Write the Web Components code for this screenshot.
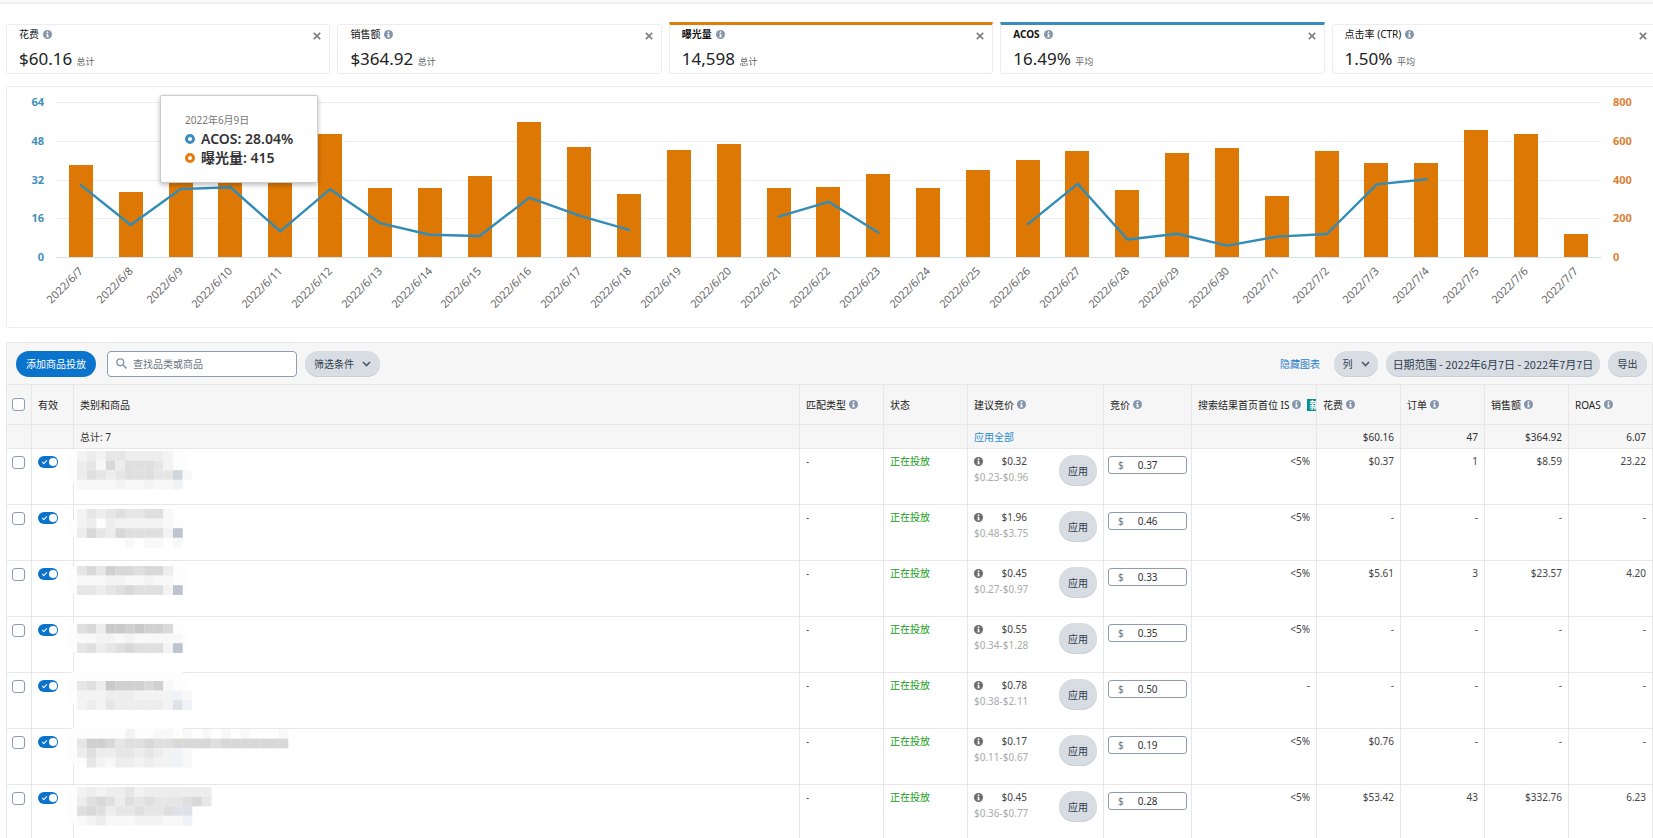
<!DOCTYPE html>
<html lang="zh-CN">
<head>
<meta charset="utf-8">
<title>商品投放</title>
<style>
html{scrollbar-width:none}
body{margin:0;overflow-x:hidden;background:#fff;color:#232f3e;font:10px/16px "Noto Sans","Noto Sans CJK SC",sans-serif}
</style>
</head>
<body>
<campaign-page>
  <metric-card label="花费" value="$60.16" kind="总计"></metric-card>
  <metric-card label="销售额" value="$364.92" kind="总计"></metric-card>
  <metric-card label="曝光量" value="14,598" kind="总计" active style="--accent:#e07b0c"></metric-card>
  <metric-card label="ACOS" value="16.49%" kind="平均" active style="--accent:#3a8dbb"></metric-card>
  <metric-card label="点击率 (CTR)" value="1.50%" kind="平均"></metric-card>
  <trend-chart slot="chart"></trend-chart>
  <table-toolbar slot="table"></table-toolbar>
  <target-table slot="table"></target-table>
</campaign-page>
<script>
class Base extends HTMLElement {
  connectedCallback() {
    if (this.shadowRoot) return;
    this.attachShadow({ mode: 'open' }).innerHTML = this.render();
  }
}

customElements.define('campaign-page', class extends Base {
  render() {
    return `<style>
      :host{display:block;overflow:hidden;box-sizing:border-box}
      .strip{height:2px;background:#fafafa;border-bottom:2px solid #f0f0f0}
      .cards{display:grid;grid-template-columns:repeat(5,1fr);gap:7px;align-items:end;margin:18px -3px 0 6px}
      .chart{margin:12px -3px 0 6px}
      .table{margin:14px 0 0 6px}
    </style>
    <div class="strip"></div>
    <section class="cards"><slot></slot></section>
    <section class="chart"><slot name="chart"></slot></section>
    <section class="table"><slot name="table"></slot></section>`;
  }
});

customElements.define('info-icon', class extends Base {
  render() {
    return `<style>:host{display:inline-block;flex:none;width:9px;height:9px;color:#8494ab}svg{display:block;width:100%;height:100%}</style>
    <svg viewBox="0 0 18 18" aria-hidden="true"><circle cx="9" cy="9" r="9" fill="currentColor"/>
    <circle cx="9" cy="4.4" r="1.8" fill="#fff"/><path d="M6.4 7.4h4.2v5.4h1.4v1.8H6.2v-1.8h1.4V9.2H6.4z" fill="#fff"/></svg>`;
  }
});

customElements.define('metric-card', class extends Base {
  render() {
    const a = n => this.getAttribute(n);
    return `<style>
      :host{display:block;box-sizing:border-box;height:50px;border:1px solid #ededed;border-radius:3px;padding:0 8px 0 12px;background:#fff}
      :host([active]){height:52px;border-top:3px solid var(--accent);border-radius:0 0 3px 3px}
      header{display:flex;align-items:center;gap:4px;height:18px}
      h3{margin:0;font-size:10px;font-weight:400;line-height:16px;color:#111}
      :host([active]) h3{font-weight:700}
      button{margin-left:auto;border:0;background:none;padding:3px 0 0;width:8px;height:18px}
      svg{display:block;width:8px;height:8px}
      p{margin:4px 0 0;line-height:24px;font-size:17px;color:#222}
      small{font-size:9px;color:#666}
    </style>
    <header><h3>${a('label')}</h3><info-icon></info-icon>
      <button aria-label="移除${a('label')}"><svg viewBox="0 0 8 8"><path d="M.8.8l6.4 6.4M7.2.8L.8 7.2" stroke="#808080" stroke-width="1.7"/></svg></button></header>
    <p>${a('value')} <small>${a('kind')}</small></p>`;
  }
});

const DATES = [...Array.from({ length: 24 }, (_, i) => `2022/6/${i + 7}`), ...Array.from({ length: 7 }, (_, i) => `2022/7/${i + 1}`)];
const IMPRESSIONS = [475,333,415,410,400,633,355,355,420,698,567,323,554,581,358,363,429,358,450,502,546,347,535,562,317,546,486,486,654,635,121];
const ACOS = [29.7,13.2,28.04,28.8,10.6,28,14,9.2,8.7,24.5,17.1,11.2,null,null,16.7,22.8,10.1,null,null,13.6,30.2,7.2,9.6,4.7,8.4,9.5,30,32.1,null,null,null];

customElements.define('trend-chart', class extends Base {
  render() {
    let path = '', pen = 'M';
    ACOS.forEach((v, i) => {
      if (v === null) { pen = 'M'; return; }
      path += `${pen}${i + .5} ${64 - v}`;
      pen = 'L';
    });
    return `<style>
      :host{display:block;box-sizing:border-box;position:relative;height:242px;border:1px solid #ededed;border-radius:3px;padding-top:15px}
      .row{display:grid;grid-template-columns:49px 1fr 54px}
      .axis{display:flex;flex-direction:column;justify-content:space-between;height:171px;margin-top:-8px;font:700 11px/16px "Noto Sans",sans-serif}
      .left{text-align:right;padding-right:12px;color:#4390bb}
      .right{padding-left:12px;color:#dd7f35}
      .plot{display:grid;height:155px}
      .plot>*{grid-area:1/1;min-width:0;min-height:0}
      .grid{display:flex;flex-direction:column;justify-content:space-between;margin-bottom:-1px}
      .grid i{height:1px;background:#ededed}
      .grid i:last-child{background:#d5e0eb}
      .bars{display:flex;align-items:flex-end;justify-content:space-around}
      .bars i{width:24px;background:#dd7804}
      svg{width:100%;height:155px;overflow:visible;display:block}
      .dates{grid-column:2;display:flex;margin-top:-2px}
      .dates div{flex:1 1 0;width:0}
      .dates div>div{width:50%;display:flex;justify-content:flex-end}
      .dates span{white-space:nowrap;font-size:11px;line-height:12px;color:#666;transform-origin:right center;transform:rotate(-45deg)}
      .tip{position:absolute;left:153px;top:8px;box-sizing:border-box;width:158px;height:88px;padding:15px 0 0 24px;background:#fff;border:1px solid #ccc;border-radius:2px;box-shadow:0 2px 5px #0004}
      .tip p{margin:0;font-size:10px;line-height:18px;color:#777}
      .tip b{display:flex;align-items:center;gap:6px;font-weight:600;font-size:14px;line-height:19px;color:#333;white-space:nowrap}
      .tip u{box-sizing:border-box;flex:none;width:10px;height:10px;border:3px solid #3a8dbb;border-radius:50%}
    </style>
    <div class="row">
      <div class="axis left"><span>64</span><span>48</span><span>32</span><span>16</span><span>0</span></div>
      <div class="plot">
        <div class="grid"><i></i><i></i><i></i><i></i><i></i></div>
        <div class="bars">${IMPRESSIONS.map(v => `<i style="height:${v / 8}%"></i>`).join('')}</div>
        <svg viewBox="0 0 31 64" preserveAspectRatio="none"><path d="${path}" fill="none" stroke="#318cb8" stroke-width="2.4" vector-effect="non-scaling-stroke" stroke-linejoin="round" stroke-linecap="round"/></svg>
      </div>
      <div class="axis right"><span>800</span><span>600</span><span>400</span><span>200</span><span>0</span></div>
      <div class="dates">${DATES.map(d => `<div><div><span>${d}</span></div></div>`).join('')}</div>
    </div>
    <div class="tip"><p>2022年6月9日</p><b><u></u>ACOS: 28.04%</b><b><u style="border-color:#e67c0c"></u>曝光量: 415</b></div>`;
  }
});

customElements.define('pill-button', class extends Base {
  render() {
    return `<style>
      :host{display:block}
      button{display:flex;align-items:center;justify-content:center;gap:8px;box-sizing:border-box;width:100%;height:26px;padding:0;border:0;border-radius:15px;background:#d8dde3;box-shadow:inset 0 -1px #c8ced6;color:#2d3b4e;font:inherit;white-space:nowrap}
      :host([primary]) button{background:#0a73cc;box-shadow:none;color:#fff}
      :host([tall]) button{height:31px}
      svg{width:9px;height:6px}
    </style>
    <button><slot></slot>${this.hasAttribute('menu') ? '<svg viewBox="0 0 9 6"><path d="M1 1l3.5 3.5L8 1" fill="none" stroke="#4b5a70" stroke-width="1.6"/></svg>' : ''}</button>`;
  }
});

customElements.define('table-toolbar', class extends Base {
  render() {
    return `<style>
      :host{display:flex;align-items:center;gap:8px;box-sizing:border-box;height:42px;padding:0 5px 0 9px;background:#f6f6f6;border:1px solid #e7e7e7;border-bottom:0;border-radius:3px 3px 0 0}
      .add{width:80px;margin-right:3px}
      label{display:flex;align-items:center;gap:6px;box-sizing:border-box;width:190px;height:26px;padding-left:8px;border:1px solid #8d9cb3;border-radius:4px;background:#fff}
      label svg{width:11px;height:11px;flex:none}
      input{flex:1;min-width:0;border:0;padding:0;background:none;font:inherit;outline:0}
      input::placeholder{color:#6b7482;opacity:1}
      .filter{width:75px}
      a{margin-left:auto;margin-right:6px;color:#2b80c9;text-decoration:none}
      .cols{width:44px}
      .range{width:214px;font-size:11px;font-family:"Noto Sans CJK SC",sans-serif}
      .export{width:39px}
    </style>
    <pill-button class="add" primary>添加商品投放</pill-button>
    <label><svg viewBox="0 0 11 11"><circle cx="4.3" cy="4.3" r="3.4" fill="none" stroke="#8494ab" stroke-width="1.4"/><path d="M6.8 6.8l3.6 3.6" stroke="#8494ab" stroke-width="1.6"/></svg>
      <input type="search" aria-label="查找品类或商品" placeholder="查找品类或商品"></label>
    <pill-button class="filter" menu>筛选条件</pill-button>
    <a href="#">隐藏图表</a>
    <pill-button class="cols" menu>列</pill-button>
    <pill-button class="range">日期范围 - 2022年6月7日 - 2022年7月7日</pill-button>
    <pill-button class="export">导出</pill-button>`;
  }
});

customElements.define('toggle-switch', class extends Base {
  render() {
    return `<style>
      :host{display:block;width:20px;height:12px}
      input{appearance:none;display:block;position:relative;margin:0;width:20px;height:12px;border-radius:6px;background:#0a73cc}
      input::before{content:"";position:absolute;right:1px;top:2px;width:8px;height:8px;border-radius:50%;background:#fff}
      input::after{content:"";position:absolute;left:4px;top:4px;width:4px;height:2px;border:solid #fff;border-width:0 0 1px 1px;transform:rotate(-45deg)}
    </style><input type="checkbox" role="switch" checked aria-label="有效">`;
  }
});

customElements.define('bid-input', class extends Base {
  render() {
    return `<style>
      :host{display:block}
      label{display:flex;align-items:center;box-sizing:border-box;height:18px;border:1px solid #8d9cb3;border-radius:3px;background:#fff;padding-left:9px;color:#66758c}
      input{width:40px;margin-left:14px;border:0;padding:0;background:none;font:inherit;color:#333;outline:0}
    </style><label>$<input aria-label="竞价" value="${this.getAttribute('value')}"></label>`;
  }
});

/* Redacted product name: a coarse mosaic. Each character is one tile, 0 is empty. */
const TILE = { 1: '#f8f8f8', 2: '#f3f3f3', 3: '#ededed', 4: '#e6e6e6', 5: '#dfdfdf', 6: '#d8d8d8', 7: '#d0d0d0', 8: '#c9c9c9', a: '#eff2f6', b: '#dee2e8', c: '#cfd6e0', d: '#bcc4d0' };
const MOSAICS = [
  [2, 0, 34, ['2324433332', '3416355542', '3543455544c1', '1111211211a']],
  [4, 14, 18, ['2434544551', '2303222221', '3643655552d', '00000101101']],
  [5, 5, 28, ['4647665663', '1112211211', '4434565552d']],
  [7, 6, 30, ['5638878776', '11221211111', '4534565552d']],
  [8, -2, 34, ['4538777671', '2223332222a1', '2324333332ba']],
  [0, -2, 38, ['00000200110101010100010', '4776455655666656666666', '3533443432a1', '0421332322a1']],
  [2, 0, 38, ['23233423333333', '35653545444564', '5653445445bb', '12311122211a']]
];
customElements.define('name-mosaic', class extends Base {
  render() {
    const [y, sy, sh, rows] = MOSAICS[this.getAttribute('index')];
    const t = 9.6;
    const tiles = rows.map((r, j) => [...r].map((c, i) => c === '0' ? '' :
      `<rect x="${10 + i * t}" y="${y + j * t}" width="9.7" height="9.7" fill="${TILE[c]}"/>`).join('')).join('');
    return `<style>:host{display:block;height:54px;margin-left:-13px;position:relative}svg{display:block;overflow:visible}</style>
    <svg width="310" height="54" aria-hidden="true"><rect x="0" y="${sy}" width="120" height="${sh}" rx="9" fill="#fdfdfd"/>${tiles}</svg>`;
  }
});

const ROWS = [
  ['$0.32', '$0.23-$0.96', '0.37', '<5%', '$0.37', '1', '$8.59', '23.22'],
  ['$1.96', '$0.48-$3.75', '0.46', '<5%', '-', '-', '-', '-'],
  ['$0.45', '$0.27-$0.97', '0.33', '<5%', '$5.61', '3', '$23.57', '4.20'],
  ['$0.55', '$0.34-$1.28', '0.35', '<5%', '-', '-', '-', '-'],
  ['$0.78', '$0.38-$2.11', '0.50', '-', '-', '-', '-', '-'],
  ['$0.17', '$0.11-$0.67', '0.19', '<5%', '$0.76', '-', '-', '-'],
  ['$0.45', '$0.36-$0.77', '0.28', '<5%', '$53.42', '43', '$332.76', '6.23']
];
customElements.define('target-table', class extends Base {
  render() {
    const head = (t, extra = '') => `<th><div>${t}<info-icon></info-icon>${extra}</div></th>`;
    return `<style>
      :host{display:block}
      table{width:100%;table-layout:fixed;border-collapse:separate;border-spacing:0;border-left:1px solid #e7e7e7}
      th,td{box-sizing:border-box;border:solid #e7e7e7;border-width:0 1px 1px 0;padding:0 6px;text-align:left;font-weight:400;white-space:nowrap;overflow:hidden}
      thead th{height:41px;border-top-width:1px;background:#f6f6f6;color:#222}
      th div{display:flex;align-items:center;gap:3px}
      .total td{height:24px;background:#f6f6f6;color:#333;line-height:16px}
      .item td{height:56px;padding-top:4px;vertical-align:top;color:#444}
      .item td.check{padding-top:7px}
      .item td.toggle{padding:7px 6px 0}
      .item td.name{padding-top:0;overflow:visible}
      .item td.bid{padding:7px 4px 0}
      td.num{text-align:right}
      .check{padding:0 5px}
      .check input{appearance:none;display:block;box-sizing:border-box;width:13px;height:13px;margin:0;border:1px solid #8d9cb3;border-radius:3px;background:#fff}
      a{color:#2b8ccf;text-decoration:none}
      .item td.status{color:#179c17}
      .suggest{display:flex;justify-content:space-between}
      .suggest p{margin:0;width:53px}
      .range{color:#aaa}
      .price{display:flex;align-items:center;justify-content:space-between}
      .price info-icon{color:#6b6b6b}
      .suggest pill-button{width:38px;margin-top:2px}
      em{font-style:normal;font-weight:700;line-height:12px;color:#fff;background:#0d8c8c;padding:0 2px;margin-left:3px}
    </style>
    <table>
      <colgroup><col style="width:25px"><col style="width:42px"><col><col style="width:84px"><col style="width:84px"><col style="width:136px"><col style="width:88px"><col style="width:125px"><col style="width:84px"><col style="width:84px"><col style="width:84px"><col style="width:84px"></colgroup>
      <thead><tr>
        <th class="check"><input type="checkbox" aria-label="全选"></th><th>有效</th><th>类别和商品</th>
        ${head('匹配类型')}<th>状态</th>${head('建议竞价')}${head('竞价')}${head('搜索结果首页首位 IS', '<em>新</em>')}
        ${head('花费')}${head('订单')}${head('销售额')}${head('ROAS')}
      </tr></thead>
      <tbody>
        <tr class="total"><td></td><td></td><td>总计: 7</td><td></td><td></td><td><a href="#">应用全部</a></td><td></td><td></td>
          <td class="num">$60.16</td><td class="num">47</td><td class="num">$364.92</td><td class="num">6.07</td></tr>
        ${ROWS.map((r, i) => `<tr class="item">
          <td class="check"><input type="checkbox" aria-label="选择第${i + 1}行"></td>
          <td class="toggle"><toggle-switch></toggle-switch></td>
          <td class="name"><name-mosaic index="${i}"></name-mosaic></td>
          <td>-</td><td class="status">正在投放</td>
          <td><div class="suggest"><p><span class="price"><info-icon></info-icon>${r[0]}</span><span class="range">${r[1]}</span></p><pill-button tall>应用</pill-button></div></td>
          <td class="bid"><bid-input value="${r[2]}"></bid-input></td>
          ${r.slice(3).map(v => `<td class="num">${v}</td>`).join('')}
        </tr>`).join('')}
      </tbody>
    </table>`;
  }
});
</script>
</body>
</html>
